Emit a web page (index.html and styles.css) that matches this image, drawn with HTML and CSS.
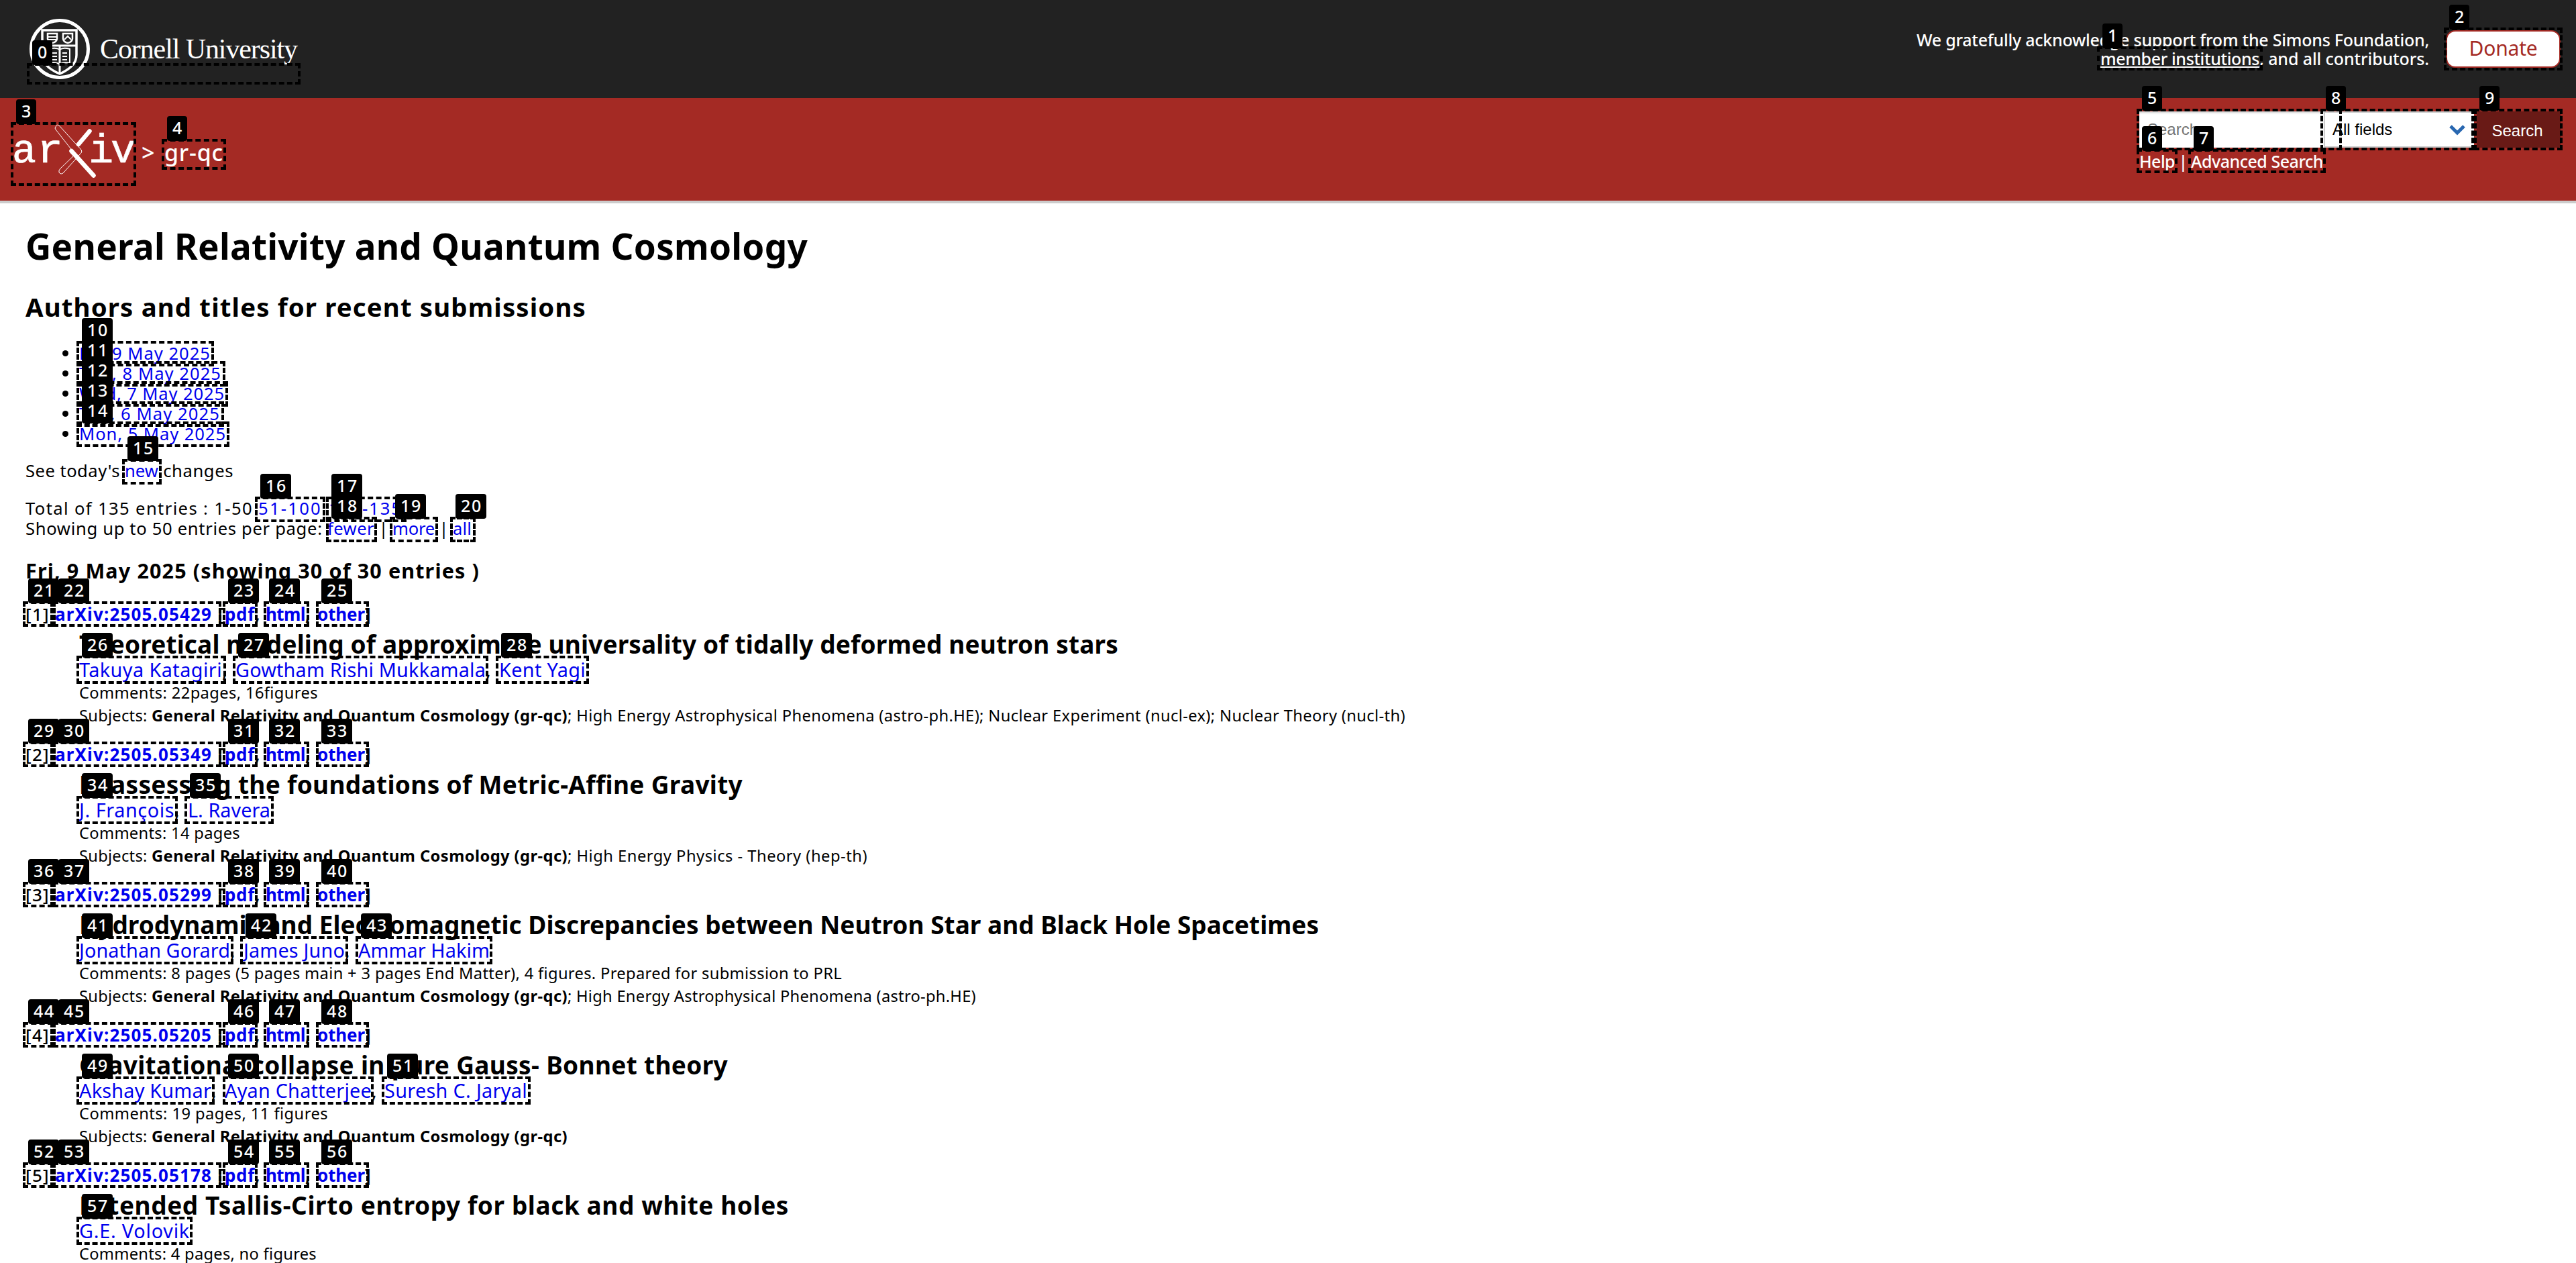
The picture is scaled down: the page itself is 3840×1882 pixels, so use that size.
FILE: index.html
```html
<!DOCTYPE html>
<html lang="en">
<head>
<meta charset="utf-8">
<title>General Relativity and Quantum Cosmology</title>
<link rel="stylesheet" href="styles.css">
</head>
<body>
<header class="cu">
  <div class="cu-logo">
    <svg class="seal" width="90" height="92" viewBox="0 0 90 92" fill="none" stroke="#fff">
      <circle cx="45" cy="46" r="42.5" stroke-width="5"/>
      <path d="M19 18H70V55Q70 72 45 83Q19 72 19 55Z" stroke-width="3.5"/>
      <path d="M19 41H70M45 41V82" stroke-width="3"/>
      <path d="M27 23H41V31Q40 36 34 37Q28 36 27 31ZM50 23H64V31Q63 36 57 37Q51 36 50 31Z" stroke-width="2.5"/>
      <path d="M28 28H40M28 32H40M52 32L57 27L62 32" stroke-width="2"/>
      <path d="M29 67V46Q40 43 45 47Q50 43 60 46V67M33 52H41M33 57H41M33 62H41M49 52H56M49 57H56M49 62H56M29 67Q40 65 45 69Q50 65 60 67" stroke-width="2"/>
    </svg>
    <span class="cornell" data-w="294">Cornell University</span>
  </div>
  <div class="cu-right">
    <div class="support">
      <div class="row"><span data-w="764">We gratefully acknowledge support from the Simons Foundation,</span></div>
      <div class="row"><a class="under" data-w="237">member institutions</a><span data-w="253">, and all contributors.</span></div>
    </div>
    <div class="donate"><span data-w="102">Donate</span></div>
  </div>
</header>
<div class="bar">
  <div class="crumbs">
    <svg class="arxiv" width="184" height="84" viewBox="0 0 184 84" fill="none" stroke="#fff">
      <g class="arxiv-text" fill="#fff" stroke-width="0.6">
        <text x="-2" y="58" textLength="36" lengthAdjust="spacingAndGlyphs">a</text>
        <text x="35" y="58" textLength="39" lengthAdjust="spacingAndGlyphs">r</text>
        <text x="112" y="58">i</text>
        <text x="145" y="58" textLength="37" lengthAdjust="spacingAndGlyphs">v</text>
      </g>
      <path d="M113.500 11.500L97 31" stroke-width="6.500" stroke-linecap="round"/>
      <path d="M86.500 41L119.500 77.500" stroke-width="6.500" stroke-linecap="round"/>
      <path d="M63 5Q65 0 69 4L100 38Q104 42 99 46L75 73Q71 77 68 73Q67 70 70 67L92 46L85 37L63 9Q61 7 63 5Z" stroke-width="1"/>
    </svg>
    <span class="gt">&gt;</span><span class="arch" data-w="88">gr-qc</span>
  </div>
  <div class="search">
    <div class="fields">
      <div class="input">Search...</div>
      <div class="select">All fields<svg width="24" height="17" viewBox="0 0 24 17" fill="none" stroke="#2867b0" stroke-width="5"><path d="M2 3L12 13L22 3"/></svg></div>
      <div class="button">Search</div>
    </div>
    <div class="row help"><a data-w="53">Help</a><span data-w="24"> | </span><a data-w="197">Advanced Search</a></div>
  </div>
</div>
<main>
  <h1><span data-w="1166">General Relativity and Quantum Cosmology</span></h1>
  <h2><span data-w="836">Authors and titles for recent submissions</span></h2>
  <ul>
    <li><a data-w="196">Fri, 9 May 2025</a></li>
    <li><a data-w="212">Thu, 8 May 2025</a></li>
    <li><a data-w="217">Wed, 7 May 2025</a></li>
    <li><a data-w="210">Tue, 6 May 2025</a></li>
    <li><a data-w="219">Mon, 5 May 2025</a></li>
  </ul>
  <div class="row today"><span data-w="148">See today's </span><a data-w="50">new</a><span data-w="112"> changes</span></div>
  <div class="row"><span data-w="347">Total of 135 entries : 1-50 </span><a data-w="95">51-100</a><span data-w="10"> </span><a data-w="110">101-135</a></div>
  <div class="row"><span data-w="450">Showing up to 50 entries per page: </span><a data-w="70">fewer</a><span data-w="27"> | </span><a data-w="63">more</a><span data-w="27"> | </span><a data-w="28">all</a></div>
  <h3><span data-w="677">Fri, 9 May 2025 (showing 30 of 30 entries )</span></h3>

  <article>
    <div class="row dt"><span class="num" data-w="36">[1]</span><span data-w="8"> </span><a data-w="234">arXiv:2505.05429</a><span data-w="19"> [</span><a data-w="45">pdf</a><span data-w="16">, </span><a data-w="59">html</a><span data-w="18">, </span><a data-w="71">other</a><span>]</span></div>
    <div class="row title"><span data-w="1549">Theoretical modeling of approximate universality of tidally deformed neutron stars</span></div>
    <div class="row authors"><a data-w="213">Takuya Katagiri</a><span data-w="20">, </span><a data-w="373">Gowtham Rishi Mukkamala</a><span data-w="20">, </span><a data-w="129">Kent Yagi</a></div>
    <div class="row meta"><span data-w="356">Comments: 22pages, 16figures</span></div>
    <div class="row meta"><span data-w="108">Subjects: </span><b data-w="620">General Relativity and Quantum Cosmology (gr-qc)</b><span data-w="1249">; High Energy Astrophysical Phenomena (astro-ph.HE); Nuclear Experiment (nucl-ex); Nuclear Theory (nucl-th)</span></div>
  </article>
  <article>
    <div class="row dt"><span class="num" data-w="36">[2]</span><span data-w="8"> </span><a data-w="234">arXiv:2505.05349</a><span data-w="19"> [</span><a data-w="45">pdf</a><span data-w="16">, </span><a data-w="59">html</a><span data-w="18">, </span><a data-w="71">other</a><span>]</span></div>
    <div class="row title"><span data-w="989">Reassessing the foundations of Metric-Affine Gravity</span></div>
    <div class="row authors"><a data-w="142">J. François</a><span data-w="20">, </span><a data-w="123">L. Ravera</a></div>
    <div class="row meta"><span data-w="240">Comments: 14 pages</span></div>
    <div class="row meta"><span data-w="108">Subjects: </span><b data-w="620">General Relativity and Quantum Cosmology (gr-qc)</b><span data-w="447">; High Energy Physics - Theory (hep-th)</span></div>
  </article>
  <article>
    <div class="row dt"><span class="num" data-w="36">[3]</span><span data-w="8"> </span><a data-w="234">arXiv:2505.05299</a><span data-w="19"> [</span><a data-w="45">pdf</a><span data-w="16">, </span><a data-w="59">html</a><span data-w="18">, </span><a data-w="71">other</a><span>]</span></div>
    <div class="row title"><span data-w="1848">Hydrodynamic and Electromagnetic Discrepancies between Neutron Star and Black Hole Spacetimes</span></div>
    <div class="row authors"><a data-w="225">Jonathan Gorard</a><span data-w="20">, </span><a data-w="151">James Juno</a><span data-w="20">, </span><a data-w="196">Ammar Hakim</a></div>
    <div class="row meta"><span data-w="1137">Comments: 8 pages (5 pages main + 3 pages End Matter), 4 figures. Prepared for submission to PRL</span></div>
    <div class="row meta"><span data-w="108">Subjects: </span><b data-w="620">General Relativity and Quantum Cosmology (gr-qc)</b><span data-w="609">; High Energy Astrophysical Phenomena (astro-ph.HE)</span></div>
  </article>
  <article>
    <div class="row dt"><span class="num" data-w="36">[4]</span><span data-w="8"> </span><a data-w="234">arXiv:2505.05205</a><span data-w="19"> [</span><a data-w="45">pdf</a><span data-w="16">, </span><a data-w="59">html</a><span data-w="18">, </span><a data-w="71">other</a><span>]</span></div>
    <div class="row title"><span data-w="967">Gravitational collapse in pure Gauss- Bonnet theory</span></div>
    <div class="row authors"><a data-w="197">Akshay Kumar</a><span data-w="20">, </span><a data-w="219">Ayan Chatterjee</a><span data-w="19">, </span><a data-w="213">Suresh C. Jaryal</a></div>
    <div class="row meta"><span data-w="371">Comments: 19 pages, 11 figures</span></div>
    <div class="row meta"><span data-w="108">Subjects: </span><b data-w="620">General Relativity and Quantum Cosmology (gr-qc)</b></div>
  </article>
  <article>
    <div class="row dt"><span class="num" data-w="36">[5]</span><span data-w="8"> </span><a data-w="234">arXiv:2505.05178</a><span data-w="19"> [</span><a data-w="45">pdf</a><span data-w="16">, </span><a data-w="59">html</a><span data-w="18">, </span><a data-w="71">other</a><span>]</span></div>
    <div class="row title"><span data-w="1058">Extended Tsallis-Cirto entropy for black and white holes</span></div>
    <div class="row authors"><a data-w="165">G.E. Volovik</a></div>
    <div class="row meta"><span data-w="354">Comments: 4 pages, no figures</span></div>
  </article>
</main>
<div id="marks"></div>
<script src="page.js"></script>
</body>
</html>
```

FILE: styles.css
```css
* { box-sizing: border-box; }
html, body { height: 100%; overflow: hidden; }
body {
  margin: 0;
  position: relative;
  background: #fff;
  color: #000;
  font-family: "Lucida Grande", "Noto Sans", sans-serif;
  font-size: 25.6px;
}
[data-w] { display: inline-block; white-space: pre; flex: none; }
.row { display: flex; white-space: pre; height: 30px; line-height: 30px; }
a { color: #00e; text-decoration: none; }

.cu {
  display: flex;
  justify-content: space-between;
  height: 146px;
  padding: 27px 23px 0 44px;
  background: #222;
  color: #fff;
}
.cu a, .bar a { color: #fff; }
.cu-logo { display: flex; gap: 15px; }
.cornell { font: 42px/60px "Liberation Serif", serif; margin-top: 16px; }
.cu-right { display: flex; gap: 25px; padding-top: 18px; }
.support { display: flex; flex-direction: column; align-items: flex-end; font-size: 25px; font-weight: 500; }
.support .row { height: 28px; line-height: 28px; }
.under { border-bottom: 2px solid #fff; height: 28px; }
.donate {
  width: 171px;
  height: 56px;
  border: 2px solid #a42a24;
  border-radius: 14px;
  background: #fff;
  color: #a42a24;
  font-size: 30px;
  line-height: 50px;
  text-align: center;
}

.bar {
  display: flex;
  justify-content: space-between;
  height: 157px;
  padding: 20px 23px 0 20px;
  background: #a42a24;
  border-bottom: 4px solid #ccc;
  color: #fff;
}
.crumbs { display: flex; padding-top: 18px; line-height: 86px; font-size: 34px; font-weight: 500; }
.arxiv-text { font: 62px "Liberation Mono", monospace; }
.gt { width: 34px; margin-left: 7px; }
.search { width: 628px; }
.fields { display: flex; height: 54px; font: 24px/54px "Liberation Sans", sans-serif; color: #000; }
.input {
  width: 275px;
  padding-left: 12px;
  background: #fff;
  color: #757575;
  box-shadow: inset 0 3px 3px -1px #ccc;
}
.select {
  display: flex;
  align-items: center;
  justify-content: space-between;
  width: 224px;
  padding: 0 13px 0 11px;
  border: 2px solid #ccc;
  border-right: 0;
  background: #fff;
}
.button {
  width: 125px;
  margin-left: 4px;
  padding-right: 4px;
  border-radius: 0 4px 4px 0;
  background: #691a16;
  color: #fff;
  text-align: center;
  line-height: 58px;
}
.help { margin-top: 5px; font-size: 25px; font-weight: 500; }

main { padding: 0 38px; }
h1, h2, h3 { margin: 0; font-weight: bold; }
h1 { font-size: 53px; line-height: 60px; padding-top: 34px; height: 95px; }
h2 { font-size: 38.4px; line-height: 46px; padding-top: 36px; height: 82px; }
ul { margin: 32px 0 0; padding: 0 0 0 80px; }
ul a { vertical-align: top; }
li { height: 30px; line-height: 30px; }
.today { margin: 25px 0 26px; }
h3 { font-size: 30.5px; line-height: 36px; padding-top: 29px; height: 97px; }
article { height: 209px; padding-left: 80px; }
.dt { margin-left: -80px; font-size: 26px; font-weight: bold; }
.num { font-weight: 500; }
.title { height: 43.5px; line-height: 46px; margin-top: 7px; font-size: 37px; font-weight: bold; }
.authors { height: 34px; line-height: 34px; font-size: 28.8px; }
.meta { height: 34px; line-height: 34px; font-size: 23.7px; }

#marks { position: absolute; inset: 0; overflow: hidden; pointer-events: none; }
.box { position: absolute; border: 4px dashed #000; }
.tag {
  position: absolute;
  height: 37px;
  padding: 0 6px 0 8px;
  border-radius: 4px;
  background: #000;
  color: #fff;
  font-size: 25px;
  font-weight: 500;
  line-height: 35px;
  letter-spacing: 1.6px;
}
```

FILE: page.js
```js
// Spread each measured text run over its column width.
document.querySelectorAll("[data-w]").forEach(function (el) {
  var w = Number(el.dataset.w);
  var natural = el.getBoundingClientRect().width;
  el.style.letterSpacing = (w - natural) / el.textContent.length + "px";
  el.style.width = w + "px";
});

// Numbered link markers: left, top, right, bottom.
var boxes = [
  [40, 94, 448, 126], [3126, 69, 3373, 105], [3643, 41, 3820, 105], [16, 182, 203, 277],
  [241, 207, 337, 253], [3185, 162, 3491, 224], [3185, 222, 3246, 258], [3262, 222, 3467, 258],
  [3459, 162, 3688, 224], [3688, 162, 3820, 224],
  [114, 508, 319, 546], [114, 538, 336, 576], [114, 568, 340, 606], [114, 598, 334, 636], [114, 628, 342, 666],
  [182, 684, 241, 722], [380, 740, 485, 778], [486, 740, 606, 778],
  [486, 770, 562, 808], [581, 770, 653, 808], [671, 770, 709, 808]
];
var people = [
  [[114, 337], [347, 728], [739, 878]],
  [[114, 265], [275, 408]],
  [[114, 348], [358, 519], [530, 734]],
  [[114, 320], [332, 557], [569, 791]],
  [[114, 287]]
];
people.forEach(function (list, i) {
  var y = 896 + 209 * i;
  [[34, 79], [79, 330], [332, 384], [393, 461], [471, 550]].forEach(function (s) {
    boxes.push([s[0], y, s[1], y + 38]);
  });
  list.forEach(function (s) {
    boxes.push([s[0], y + 81, s[1], y + 123]);
  });
});

var layer = document.getElementById("marks");
function add(cls, style, text) {
  var el = document.createElement("div");
  el.className = cls;
  el.style.cssText = style;
  el.textContent = text;
  layer.appendChild(el);
}
boxes.forEach(function (b, i) {
  add("box", "left:" + b[0] + "px;top:" + b[1] + "px;width:" + (b[2] - b[0]) + "px;height:" + (b[3] - b[1]) + "px", "");
  add("tag", "left:" + (b[0] + 8) + "px;top:" + (b[1] - 34) + "px", i);
});
```
